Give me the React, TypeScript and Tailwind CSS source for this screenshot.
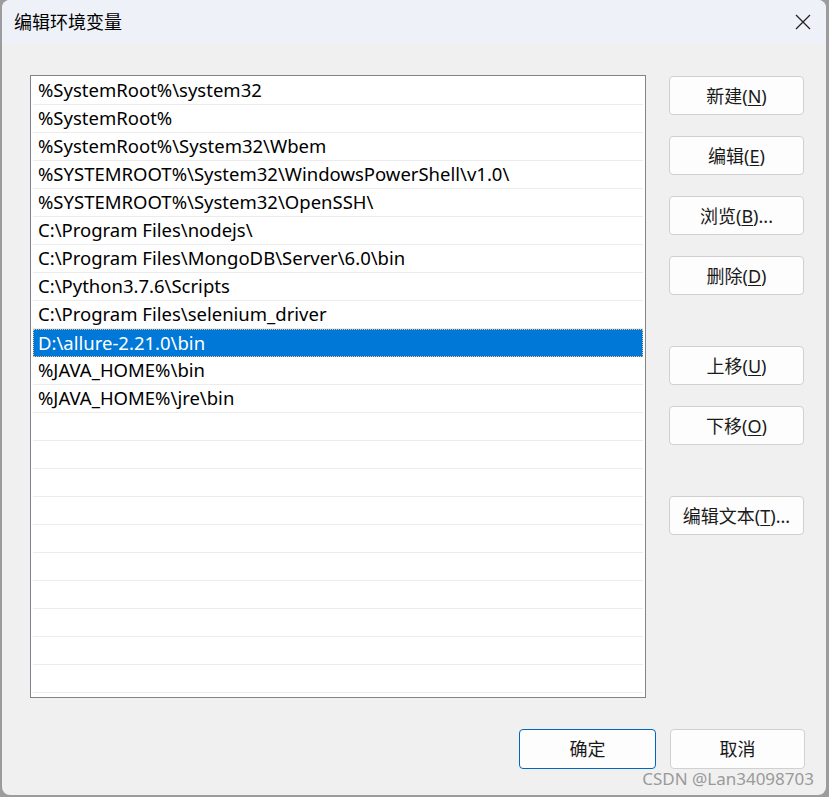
const paths = [
  "%SystemRoot%\\system32",
  "%SystemRoot%",
  "%SystemRoot%\\System32\\Wbem",
  "%SYSTEMROOT%\\System32\\WindowsPowerShell\\v1.0\\",
  "%SYSTEMROOT%\\System32\\OpenSSH\\",
  "C:\\Program Files\\nodejs\\",
  "C:\\Program Files\\MongoDB\\Server\\6.0\\bin",
  "C:\\Python3.7.6\\Scripts",
  "C:\\Program Files\\selenium_driver",
  "D:\\allure-2.21.0\\bin",
  "%JAVA_HOME%\\bin",
  "%JAVA_HOME%\\jre\\bin",
];

const selected = 9;
const rows = [...paths, ...Array(10).fill("")];

const font = { fontFamily: '"Noto Sans", "Noto Sans CJK SC", sans-serif' };

function Btn({ label, mn, tail = "", className = "" }: { label: string; mn: string; tail?: string; className?: string }) {
  return (
    <button
      className={`w-[135px] h-[39px] rounded-[4px] border border-[#d0d0d0] bg-[#fdfdfd] text-[18px] leading-none text-[#1a1a1a] flex items-center justify-center ${className}`}
    >
      {label}(<span className="underline underline-offset-2">{mn}</span>){tail}
    </button>
  );
}

export default function App() {
  return (
    <div className="w-[829px] h-[797px] bg-[#9c9c9c] pl-[2px] pr-[3px] pb-[2px]" style={font}>
      <div className="h-full rounded-t-[8px] rounded-b-[8px] overflow-hidden bg-[#f0f0f0] flex flex-col">
        {/* title bar */}
        <div className="h-[44px] bg-[#eef2f8] flex items-center justify-between pl-[12px] pr-[14px] shrink-0">
          <span className="text-[18px] text-black">编辑环境变量</span>
          <svg width="16" height="16" viewBox="0 0 16 16" className="mr-[1px]">
            <path d="M1 1L15 15M15 1L1 15" stroke="#222" strokeWidth="1.3" fill="none" />
          </svg>
        </div>

        <div className="flex pl-[28px] pt-[31px]">
          {/* list */}
          <div className="w-[616px] h-[623px] border border-[#83838e] bg-white overflow-hidden px-[2px] pt-[1px]">
            {rows.map((p, i) => (
              <div
                key={i}
                className={`h-[28px] flex items-center pl-[5px] text-[18.5px] leading-none whitespace-nowrap ${
                  i === selected
                    ? "bg-[#0078d7] text-white outline-1 outline-dotted outline-[#f0c080] -outline-offset-1"
                    : "text-black border-b border-[#ececec]"
                }`}
              >
                {p}
              </div>
            ))}
          </div>

          {/* buttons */}
          <div className="flex flex-col ml-[23px] pt-[1px]">
            <Btn label="新建" mn="N" />
            <Btn label="编辑" mn="E" className="mt-[21px]" />
            <Btn label="浏览" mn="B" tail="..." className="mt-[21px]" />
            <Btn label="删除" mn="D" className="mt-[21px]" />
            <Btn label="上移" mn="U" className="mt-[51px]" />
            <Btn label="下移" mn="O" className="mt-[21px]" />
            <Btn label="编辑文本" mn="T" tail="..." className="mt-[51px]" />
          </div>
        </div>

        {/* bottom */}
        <div className="flex justify-end gap-[14px] pr-[21px] mt-[31px]">
          <button className="w-[137px] h-[40px] rounded-[4px] border border-[#0067c0] bg-[#fdfdfd] text-[18px] text-[#1a1a1a]">
            确定
          </button>
          <button className="w-[135px] h-[40px] rounded-[4px] border border-[#d0d0d0] bg-[#fdfdfd] text-[18px] text-[#1a1a1a]">
            取消
          </button>
        </div>
        <div className="flex justify-end pr-[12px] mt-[1px]">
          <span className="text-[17px] leading-none text-[#9a9a9a]">CSDN @Lan34098703</span>
        </div>
      </div>
    </div>
  );
}
